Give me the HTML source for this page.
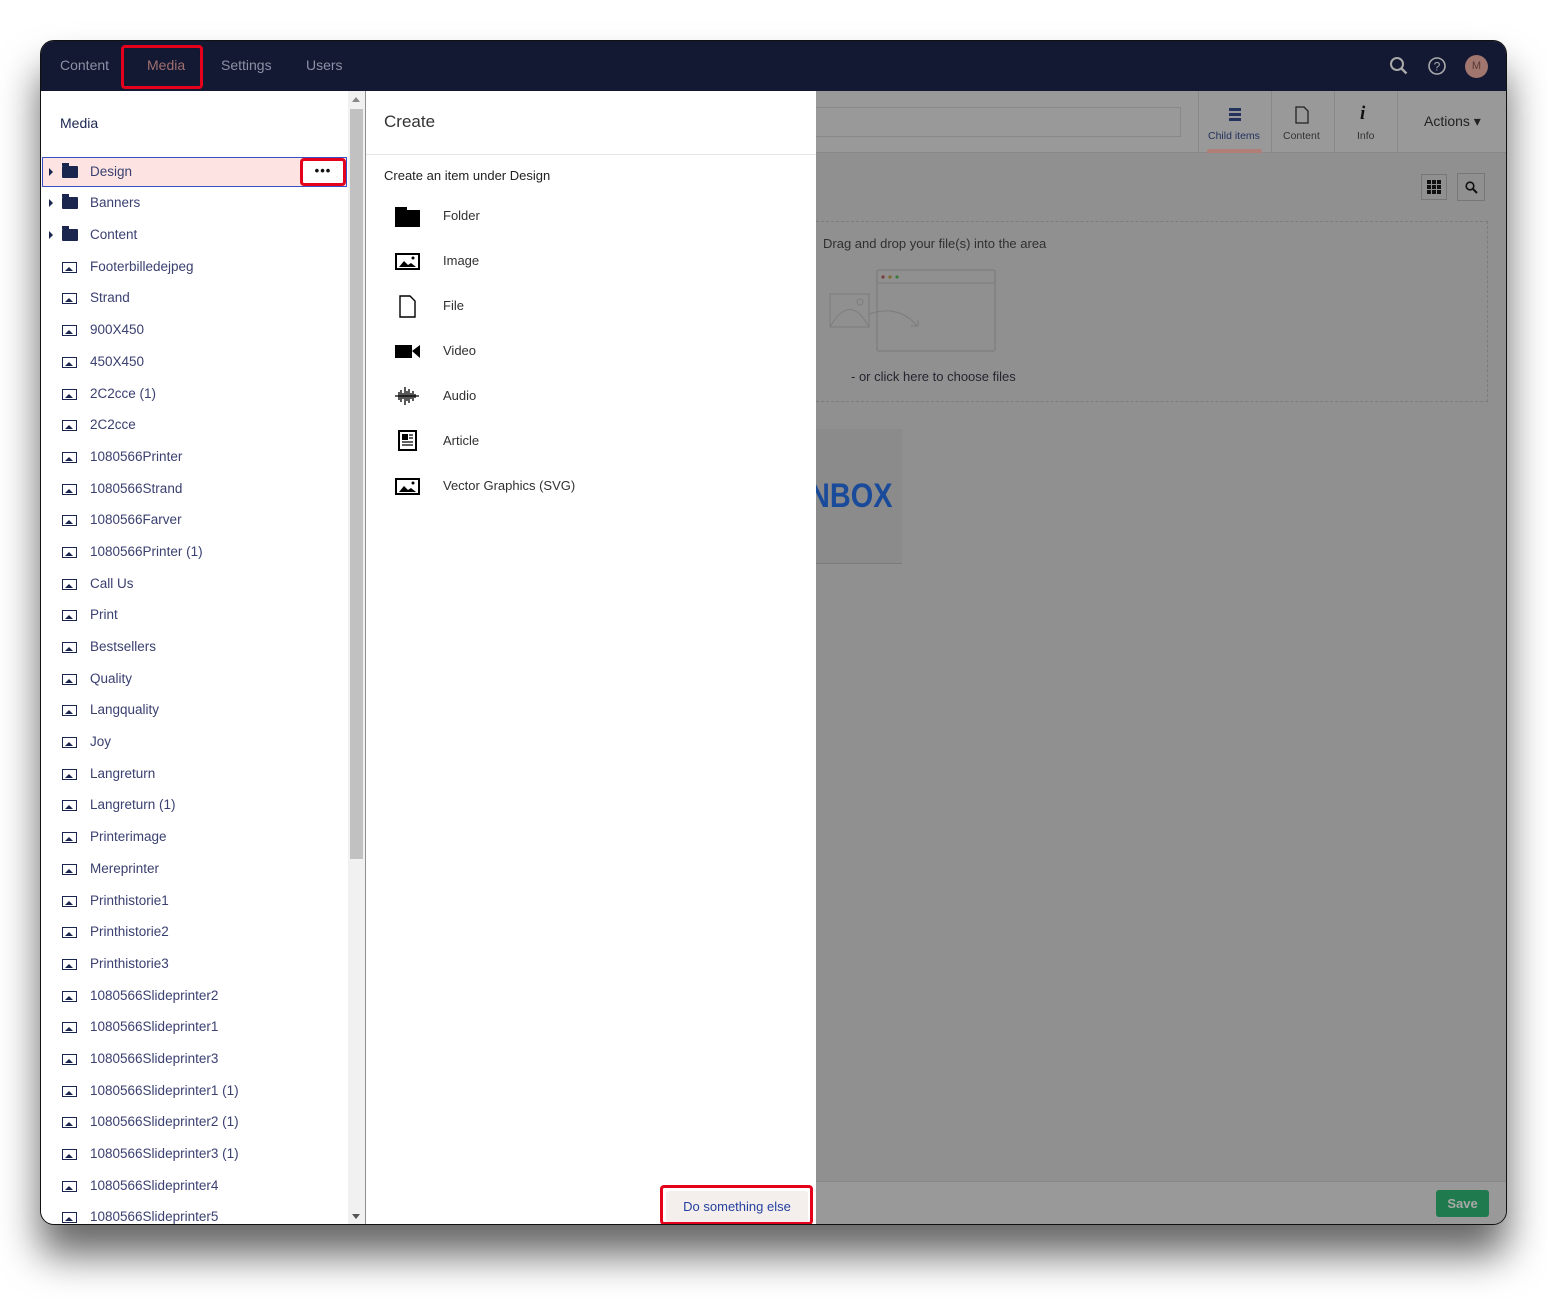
<!DOCTYPE html>
<html><head><meta charset="utf-8"><style>
*{box-sizing:border-box;margin:0;padding:0}
body{width:1547px;height:1298px;background:#fff;font-family:"Liberation Sans",sans-serif;position:relative;overflow:hidden}
.win{position:absolute;left:40px;top:40px;width:1467px;height:1185px;border-radius:14px;overflow:hidden;background:#919090;border:1.5px solid #111;box-shadow:0 30px 40px rgba(0,0,0,.6)}
.hdr{position:absolute;left:0;top:0;width:100%;height:50px;background:#131833}
.nav{position:absolute;top:16px;font-size:14px;color:#8d91a3}
.redbox{position:absolute;border:3px solid #e5001c;border-radius:4px}
.tree{position:absolute;left:0;top:50px;width:324px;height:1135px;background:#fff}
.sb{position:absolute;left:307px;top:50px;width:17px;height:1135px;background:#f1f1f1}
.sbt{position:absolute;left:309px;top:68px;width:13px;height:750px;background:#c1c1c1}
.row{position:absolute;left:0;width:305px;height:30px;font-size:13.5px;color:#3a4070;line-height:30px;white-space:nowrap}
.row .t{position:absolute;left:49px}
.ic{position:absolute;left:21px;top:10px;width:15px;height:11px;border:1.5px solid #1b264f;background:#fff}
.ic:after{content:"";position:absolute;left:2px;bottom:1px;border-left:4px solid transparent;border-right:4px solid transparent;border-bottom:4px solid #1b264f}
.fold{position:absolute;left:21px;top:9px;width:16px;height:12px;background:#1b264f;border-radius:1px}
.fold:before{content:"";position:absolute;left:0;top:-3px;width:7px;height:3px;background:#1b264f}
.car{position:absolute;left:8px;top:11px;border-top:4px solid transparent;border-bottom:4px solid transparent;border-left:4px solid #1b264f}
.cr{position:absolute;left:325px;top:50px;width:450px;height:1135px;background:#fff}
.ci{position:absolute;left:0;font-size:13px;color:#303033;white-space:nowrap}
.ci .t{position:absolute;left:77px;top:0}
.topbar{position:absolute;left:775px;top:50px;width:692px;height:62px;background:#999;border-bottom:1px solid #888}
.foot{position:absolute;left:775px;top:1140px;width:692px;height:45px;background:#999;border-top:1px solid #888}
</style></head><body>
<div class="win">
 <div class="hdr">
  <div class="nav" style="left:19px">Content</div>
  <div class="nav" style="left:106px;color:#a07070">Media</div>
  <div class="nav" style="left:180px">Settings</div>
  <div class="nav" style="left:265px">Users</div>
  <div class="redbox" style="left:80px;top:4px;width:82px;height:44px"></div>
  <svg style="position:absolute;left:1348px;top:15px" width="20" height="20" viewBox="0 0 20 20"><circle cx="8" cy="8" r="6" fill="none" stroke="#aaa" stroke-width="2"/><path d="M12.5 12.5l5 5" stroke="#aaa" stroke-width="2.4"/></svg>
  <svg style="position:absolute;left:1386px;top:15px" width="20" height="20" viewBox="0 0 20 20"><circle cx="10" cy="10" r="8" fill="none" stroke="#aaa" stroke-width="1.6"/><text x="10" y="14.5" font-size="12" text-anchor="middle" fill="#aaa" font-family="Liberation Sans">?</text></svg>
  <div style="position:absolute;left:1424px;top:14px;width:23px;height:23px;border-radius:50%;background:#a0766e;color:#5a3a35;font-size:11px;text-align:center;line-height:23px">M</div>
 </div>
 <div class="topbar">
  <div style="position:absolute;left:0;top:16px;width:365px;height:30px;border:1px solid #888;border-left:none"></div>
  <div style="position:absolute;left:382px;top:0;width:1px;height:62px;background:#888"></div>
  <div style="position:absolute;left:455px;top:0;width:1px;height:62px;background:#888"></div>
  <div style="position:absolute;left:518px;top:0;width:1px;height:62px;background:#888"></div>
  <div style="position:absolute;left:581px;top:0;width:1px;height:62px;background:#888"></div>
  <div style="position:absolute;left:413px;top:17px;width:12px;height:3px;background:#23335e;box-shadow:0 5px 0 #23335e,0 10px 0 #23335e"></div>
  <div style="position:absolute;left:392px;top:39px;font-size:10.5px;color:#23335e">Child items</div>
  <div style="position:absolute;left:391px;top:58px;width:55px;height:4px;background:#b08078;border-radius:2px 2px 0 0"></div>
  <svg style="position:absolute;left:479px;top:15px" width="14" height="18"><path d="M1 1h8l4 4v12H1z" fill="none" stroke="#222" stroke-width="1.3"/></svg>
  <div style="position:absolute;left:467px;top:39px;font-size:10.5px;color:#333">Content</div>
  <div style="position:absolute;left:544px;top:12px;font-size:19px;font-style:italic;font-weight:bold;color:#111;font-family:'Liberation Serif',serif">i</div>
  <div style="position:absolute;left:541px;top:39px;font-size:10.5px;color:#333">Info</div>
  <div style="position:absolute;left:608px;top:22px;font-size:14px;color:#222">Actions ▾</div>
 </div>
 <div style="position:absolute;left:1380px;top:133px;width:26px;height:26px;border:1px solid #777"><svg style="position:absolute;left:5px;top:5px" width="14" height="14"><g fill="#111"><rect x="0" y="0" width="4" height="4"/><rect x="5" y="0" width="4" height="4"/><rect x="10" y="0" width="4" height="4"/><rect x="0" y="5" width="4" height="4"/><rect x="5" y="5" width="4" height="4"/><rect x="10" y="5" width="4" height="4"/><rect x="0" y="10" width="4" height="4"/><rect x="5" y="10" width="4" height="4"/><rect x="10" y="10" width="4" height="4"/></g></svg></div>
 <div style="position:absolute;left:1416px;top:132px;width:28px;height:28px;border:1px solid #777"><svg style="position:absolute;left:7px;top:7px" width="13" height="13"><circle cx="5" cy="5" r="3.8" fill="none" stroke="#111" stroke-width="1.6"/><path d="M8 8l4 4" stroke="#111" stroke-width="2"/></svg></div>
 <div style="position:absolute;left:775px;top:180px;width:672px;height:181px;border:1px dashed #7c7c7c;border-left:none"></div>
 <div style="position:absolute;left:782px;top:195px;font-size:13px;color:#303030">Drag and drop your file(s) into the area</div>
 <svg style="position:absolute;left:786px;top:228px" width="172" height="84"><rect x="50" y="1" width="118" height="81" rx="2" fill="none" stroke="#7d7d7d" stroke-width="1.2"/><line x1="50" y1="14" x2="168" y2="14" stroke="#7d7d7d"/><circle cx="56" cy="8" r="1.6" fill="#7a3b3b"/><circle cx="63" cy="8" r="1.6" fill="#7a6a2b"/><circle cx="70" cy="8" r="1.6" fill="#3b7a3b"/><rect x="3" y="25" width="39" height="33" fill="none" stroke="#7d7d7d"/><circle cx="33" cy="33" r="3" fill="none" stroke="#7d7d7d"/><path d="M3 58q20-35 39 0" fill="none" stroke="#7d7d7d"/><path d="M42 45q30-10 48 12M84 57h7v-6" fill="none" stroke="#7d7d7d"/></svg>
 <div style="position:absolute;left:810px;top:328px;font-size:13px;color:#252530">- or click here to choose files</div>
 <div style="position:absolute;left:775px;top:388px;width:86px;height:135px;background:#8b8b8b;border-bottom:1px solid #7a7a7a"></div>
 <div style="position:absolute;left:768px;top:436px;font-size:34px;font-weight:bold;color:#1a4a9a;transform:scaleX(.85);transform-origin:left">NBOX</div>
 <div class="foot"><div style="position:absolute;left:620px;top:8px;width:53px;height:27px;background:#1f7a4d;border-radius:3px;color:#a8a8a8;font-size:13px;font-weight:bold;text-align:center;line-height:27px">Save</div></div>
 <div class="cr">
  <div style="position:absolute;left:18px;top:21px;font-size:17px;color:#333">Create</div>
  <div style="position:absolute;left:0;top:63px;width:450px;height:1px;background:#e5e5e5"></div>
  <div style="position:absolute;left:18px;top:77px;font-size:13px;color:#222">Create an item under Design</div>
  <div class="ci" style="top:117px"><div style="position:absolute;left:29px;top:2px;width:25px;height:17px;background:#000"></div><div style="position:absolute;left:29px;top:-1px;width:12px;height:3px;background:#000"></div><span class="t">Folder</span></div>
  <div class="ci" style="top:162px"><svg style="position:absolute;left:29px;top:0" width="25" height="17"><rect x="1" y="1" width="23" height="15" fill="none" stroke="#000" stroke-width="2"/><path d="M4 14l5-6 4 4 3-2 5 4z" fill="#000"/><circle cx="18" cy="5" r="1.5" fill="#000"/></svg><span class="t">Image</span></div>
  <div class="ci" style="top:207px"><svg style="position:absolute;left:33px;top:-3px" width="17" height="23"><path d="M1 1h10l5 5v16H1z" fill="none" stroke="#000" stroke-width="1.4"/></svg><span class="t">File</span></div>
  <div class="ci" style="top:252px"><svg style="position:absolute;left:29px;top:0" width="26" height="16"><rect x="0" y="2" width="17" height="13" fill="#000"/><path d="M17 8l8-6v13z" fill="#000"/></svg><span class="t">Video</span></div>
  <div class="ci" style="top:297px"><svg style="position:absolute;left:29px;top:-3px" width="24" height="22"><path d="M0 11h24M4 7v8M6 5v12M8 8v6M10 2v18M12 6v10M14 4v14M16 8v6M18 6v10M20 9v4" stroke="#000" stroke-width="1.3"/></svg><span class="t">Audio</span></div>
  <div class="ci" style="top:342px"><svg style="position:absolute;left:32px;top:-3px" width="19" height="21"><rect x="1" y="1" width="17" height="19" fill="none" stroke="#000" stroke-width="2"/><rect x="4" y="4" width="6" height="6" fill="#000"/><path d="M11 5h4M11 8h4M4 12h11M4 15h11" stroke="#000" stroke-width="1.3"/></svg><span class="t">Article</span></div>
  <div class="ci" style="top:387px"><svg style="position:absolute;left:29px;top:0" width="25" height="17"><rect x="1" y="1" width="23" height="15" fill="none" stroke="#000" stroke-width="2"/><path d="M4 14l5-6 4 4 3-2 5 4z" fill="#000"/><circle cx="18" cy="5" r="1.5" fill="#000"/></svg><span class="t">Vector Graphics (SVG)</span></div>
  <div style="position:absolute;left:300px;top:1100px;width:142px;height:32px;background:#f4efed;border-radius:3px;font-size:13px;color:#2541a0;line-height:32px;text-align:center;white-space:nowrap">Do something else</div>
  <div class="redbox" style="left:294px;top:1094px;width:153px;height:40px"></div>
 </div>
 <div class="tree">
  <div style="position:absolute;left:19px;top:24px;font-size:14px;color:#1b264f">Media</div>
 </div>
 <div class="sb"></div><div class="sbt"></div>
 <div style="position:absolute;left:311px;top:56px;border-left:4px solid transparent;border-right:4px solid transparent;border-bottom:5px solid #888"></div>
 <div style="position:absolute;left:311px;top:1173px;border-left:4px solid transparent;border-right:4px solid transparent;border-top:5px solid #555"></div>
 <div style="position:absolute;left:1px;top:116px;width:305px;height:30px;background:#fde4e2;border:1px solid #3a4fc0"></div>
 <div class="row" style="top:116px"><span class="car"></span><span class="fold"></span><span class="t">Design</span></div>
 <div style="position:absolute;left:259px;top:117px;width:46px;height:28px;border:3px solid #e5001c;border-radius:4px;background:#fff;text-align:center;font-size:13px;font-weight:bold;line-height:20px;color:#111;letter-spacing:1px">•••</div>
 <div class="row" style="top:147px"><span class="car"></span><span class="fold"></span><span class="t">Banners</span></div>
 <div class="row" style="top:179px"><span class="car"></span><span class="fold"></span><span class="t">Content</span></div>
 <div class="row" style="top:211px"><span class="ic"></span><span class="t">Footerbilledejpeg</span></div>
 <div class="row" style="top:242px"><span class="ic"></span><span class="t">Strand</span></div>
 <div class="row" style="top:274px"><span class="ic"></span><span class="t">900X450</span></div>
 <div class="row" style="top:306px"><span class="ic"></span><span class="t">450X450</span></div>
 <div class="row" style="top:338px"><span class="ic"></span><span class="t">2C2cce (1)</span></div>
 <div class="row" style="top:369px"><span class="ic"></span><span class="t">2C2cce</span></div>
 <div class="row" style="top:401px"><span class="ic"></span><span class="t">1080566Printer</span></div>
 <div class="row" style="top:433px"><span class="ic"></span><span class="t">1080566Strand</span></div>
 <div class="row" style="top:464px"><span class="ic"></span><span class="t">1080566Farver</span></div>
 <div class="row" style="top:496px"><span class="ic"></span><span class="t">1080566Printer (1)</span></div>
 <div class="row" style="top:528px"><span class="ic"></span><span class="t">Call Us</span></div>
 <div class="row" style="top:559px"><span class="ic"></span><span class="t">Print</span></div>
 <div class="row" style="top:591px"><span class="ic"></span><span class="t">Bestsellers</span></div>
 <div class="row" style="top:623px"><span class="ic"></span><span class="t">Quality</span></div>
 <div class="row" style="top:654px"><span class="ic"></span><span class="t">Langquality</span></div>
 <div class="row" style="top:686px"><span class="ic"></span><span class="t">Joy</span></div>
 <div class="row" style="top:718px"><span class="ic"></span><span class="t">Langreturn</span></div>
 <div class="row" style="top:749px"><span class="ic"></span><span class="t">Langreturn (1)</span></div>
 <div class="row" style="top:781px"><span class="ic"></span><span class="t">Printerimage</span></div>
 <div class="row" style="top:813px"><span class="ic"></span><span class="t">Mereprinter</span></div>
 <div class="row" style="top:845px"><span class="ic"></span><span class="t">Printhistorie1</span></div>
 <div class="row" style="top:876px"><span class="ic"></span><span class="t">Printhistorie2</span></div>
 <div class="row" style="top:908px"><span class="ic"></span><span class="t">Printhistorie3</span></div>
 <div class="row" style="top:940px"><span class="ic"></span><span class="t">1080566Slideprinter2</span></div>
 <div class="row" style="top:971px"><span class="ic"></span><span class="t">1080566Slideprinter1</span></div>
 <div class="row" style="top:1003px"><span class="ic"></span><span class="t">1080566Slideprinter3</span></div>
 <div class="row" style="top:1035px"><span class="ic"></span><span class="t">1080566Slideprinter1 (1)</span></div>
 <div class="row" style="top:1066px"><span class="ic"></span><span class="t">1080566Slideprinter2 (1)</span></div>
 <div class="row" style="top:1098px"><span class="ic"></span><span class="t">1080566Slideprinter3 (1)</span></div>
 <div class="row" style="top:1130px"><span class="ic"></span><span class="t">1080566Slideprinter4</span></div>
 <div class="row" style="top:1161px"><span class="ic"></span><span class="t">1080566Slideprinter5</span></div>
</div>
</body></html>
